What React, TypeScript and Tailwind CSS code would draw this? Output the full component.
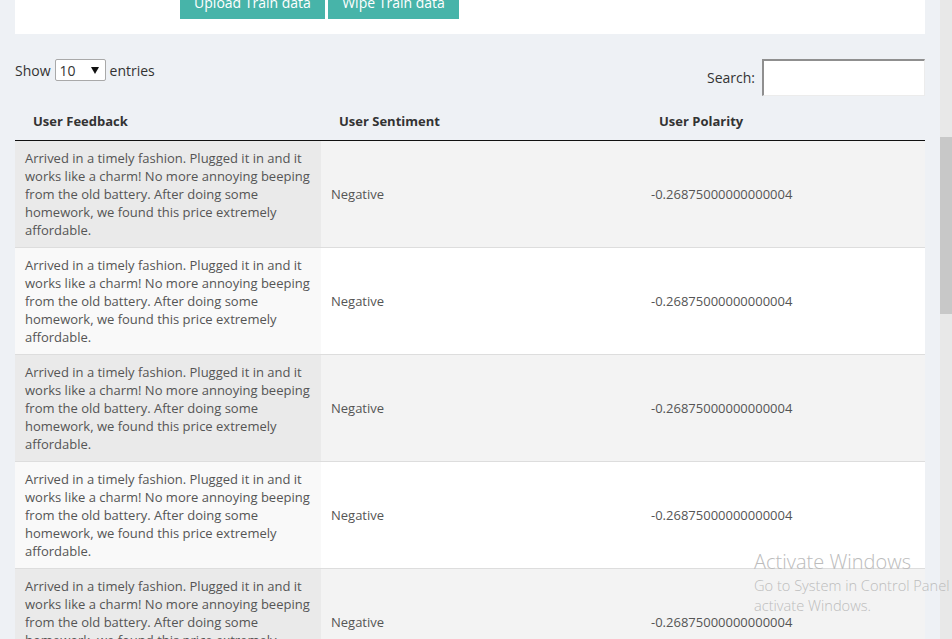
import React from 'react'

const feedback = [
  'Arrived in a timely fashion. Plugged it in and it',
  'works like a charm! No more annoying beeping',
  'from the old battery. After doing some',
  'homework, we found this price extremely',
  'affordable.',
]

const rows = Array.from({ length: 6 }, () => ({
  sentiment: 'Negative',
  polarity: '-0.26875000000000004',
}))

export default function App() {
  return (
    <div className="relative flex h-[639px] w-[952px] overflow-hidden bg-[#eef1f5] font-['Open_Sans','Liberation_Sans',sans-serif] text-[13px] text-[#333]">
      <div className="w-[940px] px-[15px]">
        {/* top form panel, scrolled partly out of view */}
        <div className="-mt-[15px] flex h-[49px] gap-[3px] bg-white pl-[165px]">
          <button className="h-[34px] w-[145px] bg-[#47b4a9] text-[14px] text-white">
            Upload Train data
          </button>
          <button className="h-[34px] w-[131px] bg-[#47b4a9] text-[14px] text-white">
            Wipe Train data
          </button>
        </div>

        <div className="mt-[25px] flex items-start justify-between">
          <div className="flex h-[22px] items-center gap-[4px] text-[14px]">
            <span>Show</span>
            <div className="flex h-[22px] w-[51px] items-center justify-between rounded-[2px] border border-[#a9a9a9] bg-white pl-[4px] pr-[6px] text-[14px]">
              <span>10</span>
              <svg width="8" height="7" viewBox="0 0 8 7">
                <path d="M0 0h8L4 7z" fill="#111" />
              </svg>
            </div>
            <span>entries</span>
          </div>
          <div className="flex items-center gap-[7px] text-[14px]">
            <span>Search:</span>
            <input
              className="h-[37px] w-[163px] border-t-2 border-l-2 border-r border-b border-t-[#8f8f8f] border-l-[#8f8f8f] border-r-[#ececec] border-b-[#ececec] bg-white outline-none"
            />
          </div>
        </div>

        <table className="mt-[6px] w-[910px] table-fixed border-collapse">
          <colgroup>
            <col className="w-[306px]" />
            <col className="w-[320px]" />
            <col className="w-[284px]" />
          </colgroup>
          <thead>
            <tr className="border-b border-[#111]">
              <th className="px-[18px] py-[10px] text-left font-bold leading-[18px]">User Feedback</th>
              <th className="px-[18px] py-[10px] text-left font-bold leading-[18px]">User Sentiment</th>
              <th className="px-[18px] py-[10px] text-left font-bold leading-[18px]">User Polarity</th>
            </tr>
          </thead>
          <tbody className="text-[#555]">
            {rows.map((r, i) => {
              const odd = i % 2 === 0
              return (
                <tr key={i} className={`border-t border-[#ddd] first:border-t-0 ${odd ? 'bg-[#f3f3f3]' : 'bg-white'}`}>
                  <td className={`px-[10px] py-[8px] leading-[18px] ${odd ? 'bg-[#eaeaea]' : 'bg-[#f9f9f9]'}`}>
                    {feedback.map((line) => (
                      <div key={line} className="whitespace-nowrap">
                        {line}
                      </div>
                    ))}
                  </td>
                  <td className="px-[10px] py-[8px] leading-[18px]">{r.sentiment}</td>
                  <td className="px-[10px] py-[8px] leading-[18px]">{r.polarity}</td>
                </tr>
              )
            })}
          </tbody>
        </table>
      </div>

      {/* scrollbar */}
      <div className="w-[12px] bg-[#e8e8e8]">
        <div className="mt-[137px] h-[177px] bg-[#c8c8c8]" />
      </div>

      {/* windows watermark */}
      <div className="pointer-events-none absolute left-[754px] top-[549px] whitespace-nowrap font-['Open_Sans','Liberation_Sans',sans-serif] font-light text-[#bcbcbc]">
        <div className="text-[20px] leading-[26px]">Activate Windows</div>
        <div className="text-[14.6px] leading-[20px]">Go to System in Control Panel to</div>
        <div className="text-[14.6px] leading-[20px]">activate Windows.</div>
      </div>
    </div>
  )
}
